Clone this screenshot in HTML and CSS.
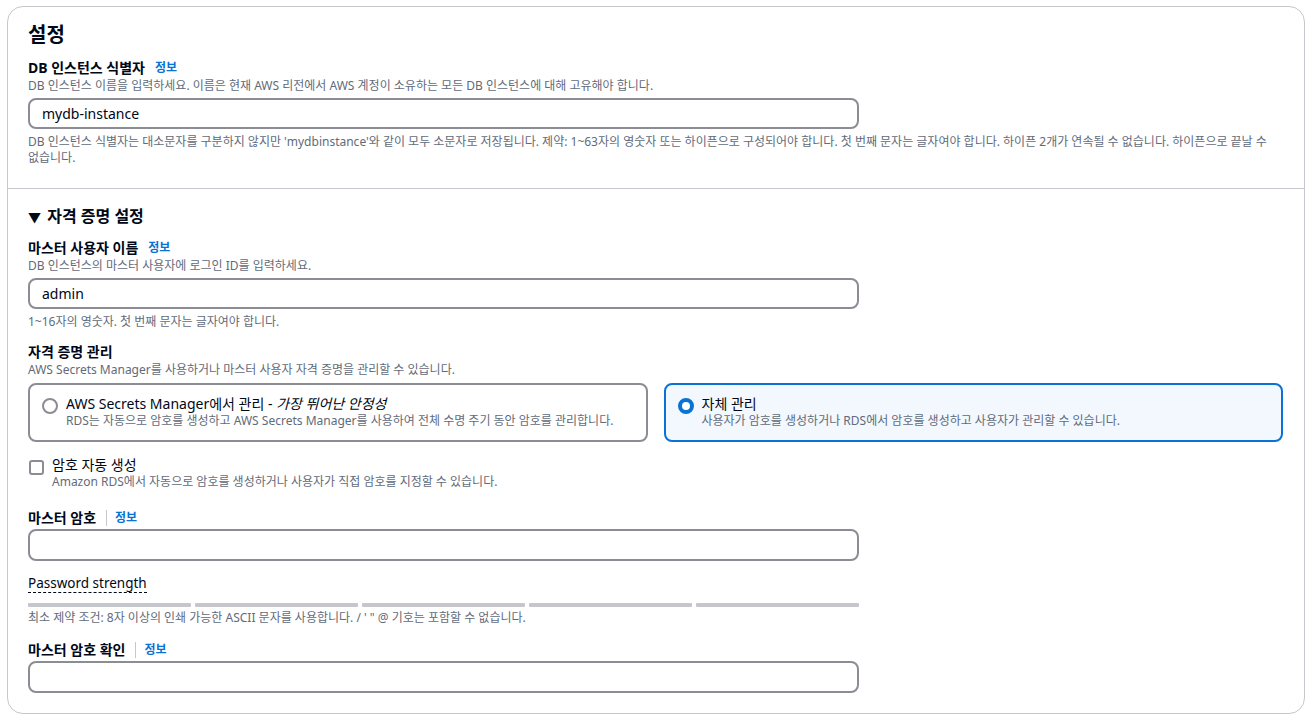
FILE: index.html
```html
<!DOCTYPE html>
<html lang="ko">

<head>
    <meta charset="UTF-8">
    <title>설정 - DB 인스턴스</title>
    <link rel="stylesheet" href="styles.css">
</head>

<body>
    <div class="card">
        <section class="section">
            <h2 class="title">설정</h2>

            <div class="field">
                <div class="label">DB 인스턴스 식별자 <a class="info">정보</a></div>
                <div class="desc">DB 인스턴스 이름을 입력하세요. 이름은 현재 AWS 리전에서 AWS 계정이 소유하는 모든 DB 인스턴스에 대해 고유해야 합니다.</div>
                <input class="input" type="text" value="mydb-instance">
                <div class="hint">DB 인스턴스 식별자는 대소문자를 구분하지 않지만 'mydbinstance'와 같이 모두 소문자로 저장됩니다. 제약: 1~63자의 영숫자 또는 하이픈으로 구성되어야 합니다. 첫 번째 문자는 글자여야 합니다. 하이픈 2개가 연속될 수 없습니다. 하이픈으로 끝날 수 없습니다.</div>
            </div>
        </section>

        <section class="section">
            <h3 class="subtitle"><span class="caret">&#9660;</span> 자격 증명 설정</h3>

            <div class="field">
                <div class="label">마스터 사용자 이름 <a class="info">정보</a></div>
                <div class="desc">DB 인스턴스의 마스터 사용자에 로그인 ID를 입력하세요.</div>
                <input class="input" type="text" value="admin">
                <div class="hint">1~16자의 영숫자. 첫 번째 문자는 글자여야 합니다.</div>
            </div>

            <div class="field">
                <div class="label">자격 증명 관리</div>
                <div class="desc">AWS Secrets Manager를 사용하거나 마스터 사용자 자격 증명을 관리할 수 있습니다.</div>
                <div class="tiles">
                    <div class="tile">
                        <span class="radio"></span>
                        <div>
                            <div class="tile-title">AWS Secrets Manager에서 관리 - <i>가장 뛰어난 안정성</i></div>
                            <div class="tile-desc">RDS는 자동으로 암호를 생성하고 AWS Secrets Manager를 사용하여 전체 수명 주기 동안 암호를 관리합니다.</div>
                        </div>
                    </div>
                    <div class="tile selected">
                        <span class="radio checked"></span>
                        <div>
                            <div class="tile-title">자체 관리</div>
                            <div class="tile-desc">사용자가 암호를 생성하거나 RDS에서 암호를 생성하고 사용자가 관리할 수 있습니다.</div>
                        </div>
                    </div>
                </div>
            </div>

            <div class="check-row">
                <span class="checkbox"></span>
                <div>
                    <div class="check-title">암호 자동 생성</div>
                    <div class="desc">Amazon RDS에서 자동으로 암호를 생성하거나 사용자가 직접 암호를 지정할 수 있습니다.</div>
                </div>
            </div>

            <div class="field">
                <div class="label">마스터 암호 <span class="sep"></span><a class="info">정보</a></div>
                <input class="input short" type="password">
            </div>

            <div class="strength">
                <span class="strength-label">Password strength</span>
                <div class="bars">
                    <span></span><span></span><span></span><span></span><span></span>
                </div>
                <div class="desc">최소 제약 조건: 8자 이상의 인쇄 가능한 ASCII 문자를 사용합니다. / ' " @ 기호는 포함할 수 없습니다.</div>
            </div>

            <div class="field last">
                <div class="label">마스터 암호 확인 <span class="sep"></span><a class="info">정보</a></div>
                <input class="input short" type="password">
            </div>
        </section>
    </div>
</body>
</html>
```

FILE: styles.css
```css
body {
    font-family: 'Noto Sans', 'Noto Sans CJK KR', sans-serif;
    color: #000716;
    background-color: white;
    margin: 0;
    padding: 6px 8px 8px 7px;
}

.card {
    border: 1px solid #c6c6cd;
    border-radius: 16px;
    background-color: #ffffff;
}

.section {
    padding: 15px 20px 10px 20px;
}

.section + .section {
    border-top: 1px solid #c6c6cd;
    padding-top: 16px;
    padding-bottom: 20px;
}

.title {
    margin: 0 0 10px 0;
    font-size: 20px;
    font-weight: 700;
    line-height: 26px;
}

.subtitle {
    margin: 0 0 10px 0;
    font-size: 16px;
    font-weight: 700;
    line-height: 22px;
}

.caret {
    font-size: 13px;
    margin-right: 2px;
}

.field {
    margin-bottom: 12px;
}

.field.last {
    margin-bottom: 0;
}

.label {
    font-size: 14px;
    font-weight: 700;
    line-height: 20px;
    display: flex;
    align-items: center;
    gap: 10px;
}

.info {
    color: #0972d3;
    font-size: 12px;
    font-weight: 700;
    cursor: pointer;
}

.sep {
    width: 1px;
    height: 16px;
    background-color: #c6c6cd;
    margin-right: -2px;
}

.desc,
.hint {
    font-size: 12px;
    line-height: 16px;
    color: #5f6b7a;
}

.hint {
    margin-top: 5px;
    max-width: 1246px;
}

.input {
    display: block;
    box-sizing: border-box;
    width: 831px;
    height: 31px;
    margin-top: 4px;
    padding: 0 12px;
    border: 2px solid #8c8c94;
    border-radius: 8px;
    font-family: inherit;
    font-size: 14px;
    color: #000716;
    outline: none;
}

.input.short {
    margin-top: 1px;
    height: 32px;
}

.tiles {
    display: grid;
    grid-template-columns: 1fr 1fr;
    gap: 16px;
    margin-top: 5px;
    margin-right: 1px;
}

.tile {
    display: flex;
    align-items: flex-start;
    gap: 8px;
    height: 59px;
    box-sizing: border-box;
    padding: 10px 12px;
    border: 2px solid #8c8c94;
    border-radius: 8px;
}

.tile.selected {
    border-color: #0972d3;
    background-color: #f2f8fd;
}

.radio {
    flex: none;
    width: 12px;
    height: 12px;
    margin-top: 3px;
    border: 2px solid #8c8c94;
    border-radius: 50%;
    background-color: #ffffff;
}

.radio.checked {
    width: 8px;
    height: 8px;
    border: 4px solid #0972d3;
}

.tile-title {
    font-size: 14px;
    line-height: 18px;
}

.tile-desc {
    font-size: 12px;
    line-height: 16px;
    color: #5f6b7a;
}

.check-row {
    display: flex;
    align-items: flex-start;
    gap: 8px;
    margin-top: 14px;
    margin-bottom: 18px;
}

.checkbox {
    flex: none;
    width: 11px;
    height: 11px;
    margin-top: 4px;
    margin-left: 1px;
    border: 2px solid #8c8c94;
    border-radius: 3px;
}

.check-title {
    font-size: 14px;
    line-height: 18px;
}

.strength {
    margin-top: -2px;
    margin-bottom: 14px;
}

.strength-label {
    font-size: 13.5px;
    line-height: 18px;
    border-bottom: 1px dashed #000716;
}

.bars {
    display: flex;
    gap: 4px;
    width: 831px;
    margin-top: 10px;
    margin-bottom: 3px;
}

.bars span {
    flex: 1;
    height: 4px;
    background-color: #c6c6cd;
    border-radius: 1px;
}
```
